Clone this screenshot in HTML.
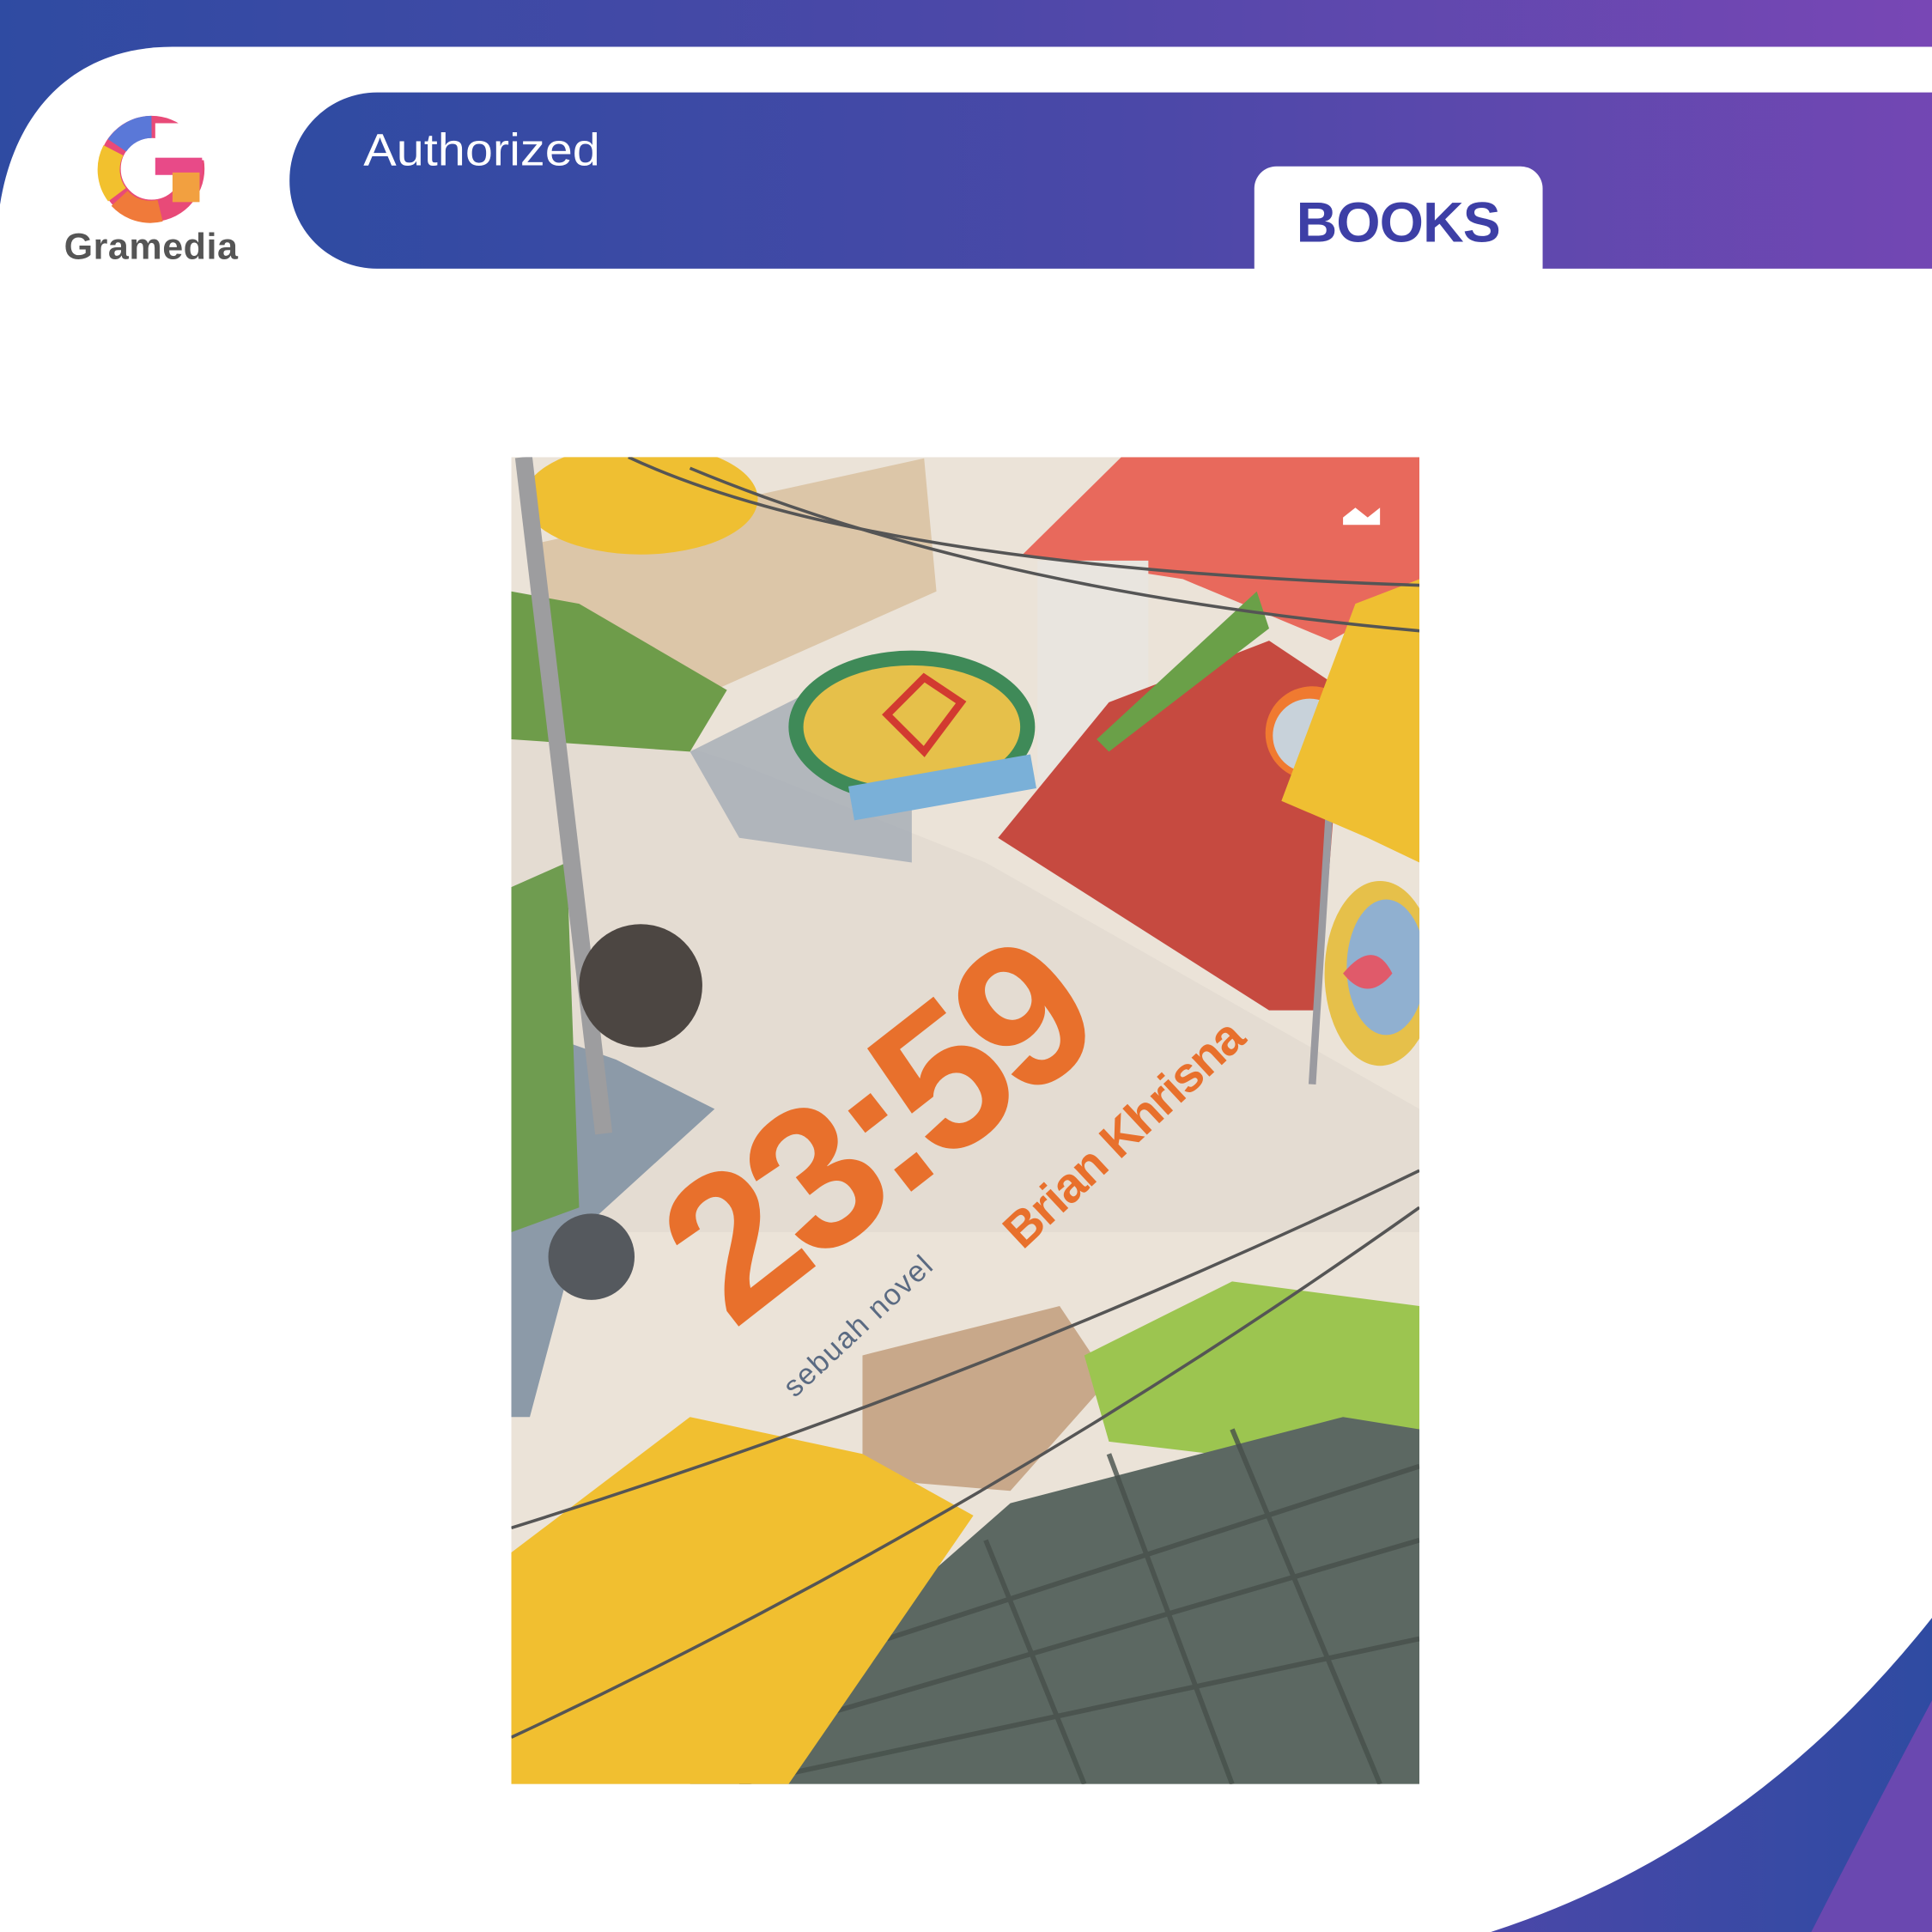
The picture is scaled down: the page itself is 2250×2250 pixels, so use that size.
<!DOCTYPE html>
<html><head><meta charset="utf-8"><style>html,body{margin:0;padding:0;background:#fff}svg{display:block}</style></head>
<body>
<svg width="2250" height="2250" viewBox="0 0 1568 1568" xmlns="http://www.w3.org/2000/svg">
<defs>
<linearGradient id="g1" x1="0" x2="1" y1="0" y2="0"><stop offset="0" stop-color="#2f4ba2"/><stop offset="0.5" stop-color="#4c48a8"/><stop offset="1" stop-color="#7847b5"/></linearGradient>
<linearGradient id="g2" x1="0" x2="1"><stop offset="0" stop-color="#4a47a8"/><stop offset="1" stop-color="#2f4ba2"/></linearGradient>
<clipPath id="cv"><rect x="415" y="371" width="737" height="1077"/></clipPath>
</defs>
<rect width="1568" height="1568" fill="#fff"/>
<rect x="0" y="0" width="1568" height="200" fill="url(#g1)"/>
<path d="M0,201 L0,166 C12,90 60,38 140,38 L1568,38 L1568,201 Z" fill="#fff"/>
<rect x="235" y="75" width="1420" height="143" rx="71" fill="url(#g1)"/>
<text x="295" y="134" font-family="Liberation Sans, sans-serif" font-size="37" fill="#fff" textLength="192" lengthAdjust="spacingAndGlyphs">Authorized</text>
<rect x="1018" y="135" width="234" height="100" rx="18" fill="#fff"/>
<rect x="1018" y="218" width="234" height="30" fill="#fff"/>
<text x="1052" y="196" font-family="Liberation Sans, sans-serif" font-weight="bold" font-size="46" fill="#3d3fa6" textLength="166">BOOKS</text>
<g>
<circle cx="123" cy="137" r="34" fill="none" stroke="#e84a78" stroke-width="18"/>
<path d="M123,103 A34,34 0 0 0 95,118" fill="none" stroke="#5a78d8" stroke-width="18"/>
<path d="M92,122 A34,34 0 0 0 95,158" fill="none" stroke="#f2c12e" stroke-width="18"/>
<path d="M97,161 A34,34 0 0 0 130,171" fill="none" stroke="#f07a3a" stroke-width="18"/>
<rect x="126" y="100" width="40" height="30" fill="#fff"/>
<rect x="126" y="128" width="38" height="14" fill="#e84a88"/>
<rect x="140" y="140" width="22" height="24" fill="#f2a040"/>
<text x="52" y="210" font-family="Liberation Sans, sans-serif" font-weight="bold" font-size="30" fill="#555" textLength="141">Gramedia</text>
</g>
<path d="M1568,1313 Q1420,1500 1210,1568 L1568,1568 Z" fill="url(#g2)"/>
<path d="M1568,1380 Q1520,1470 1470,1568 L1568,1568 Z" fill="#6a48b0"/>
<g clip-path="url(#cv)">
<rect x="415" y="371" width="737" height="1077" fill="#ebe3d8"/>
<polygon points="415,560 600,620 800,700 1152,900 1152,1000 415,1000" fill="#e4dcd2"/>
<polygon points="440,440 750,372 760,480 580,560 440,500" fill="#dcc6a8"/>
<ellipse cx="520" cy="405" rx="95" ry="45" fill="#efbf32"/>
<polygon points="415,480 470,490 590,560 560,610 415,600" fill="#6e9c4a"/>
<polygon points="560,610 700,540 740,560 740,700 600,680" fill="#9aa4b0" opacity="0.7"/>
<polygon points="830,450 910,371 1152,371 1152,480 1080,520 960,470" fill="#e8695c"/>
<rect x="842" y="455" width="90" height="185" fill="#e9e5df"/>
<polygon points="810,680 900,570 1030,520 1090,560 1070,820 1030,820" fill="#c64a40"/>
<polygon points="890,600 1020,480 1030,510 900,610" fill="#6aa048"/>
<ellipse cx="740" cy="590" rx="100" ry="62" fill="#3f8a58"/>
<ellipse cx="740" cy="590" rx="88" ry="50" fill="#e6c04a"/>
<path d="M720,580 l30,-30 l30,20 l-30,40 z" fill="none" stroke="#d23a30" stroke-width="6"/>
<rect x="690" y="625" width="150" height="28" fill="#7ab0d8" transform="rotate(-10 765 640)"/>
<circle cx="1065" cy="595" r="38" fill="#f07a30"/>
<circle cx="1063" cy="597" r="30" fill="#c8d2da"/>
<line x1="1080" y1="640" x2="1065" y2="880" stroke="#9a9aa0" stroke-width="6"/>
<polygon points="1100,490 1152,470 1152,700 1110,680 1040,650" fill="#efbf32"/>
<ellipse cx="1120" cy="790" rx="45" ry="75" fill="#e6c04a"/>
<ellipse cx="1125" cy="785" rx="32" ry="55" fill="#90b0d0"/>
<path d="M1090,790 q25,-30 40,0 q-20,25 -40,0z" fill="#e05a6a"/>
<polygon points="415,830 500,860 580,900 470,1000 430,1150 415,1150" fill="#8c9aa8"/>
<polygon points="415,720 460,700 470,980 415,1000" fill="#6f9c50"/>
<line x1="425" y1="371" x2="490" y2="920" stroke="#9d9d9f" stroke-width="14"/>
<circle cx="520" cy="800" r="50" fill="#4c4642"/>
<circle cx="480" cy="1020" r="35" fill="#55595e"/>
<polygon points="700,1100 860,1060 900,1120 820,1210 700,1200" fill="#c8a88a"/>
<polygon points="880,1100 1000,1040 1152,1060 1152,1200 900,1170" fill="#9cc550"/>
<polygon points="560,1448 820,1220 1090,1150 1152,1160 1152,1448" fill="#5c6862"/>
<g stroke="#47504b" stroke-width="4" fill="none" opacity="0.8">
<path d="M640,1400 L1152,1250"/><path d="M720,1330 L1152,1190"/><path d="M600,1448 L1152,1330"/><path d="M900,1180 L1000,1448"/><path d="M1000,1160 L1120,1448"/><path d="M800,1250 L880,1448"/>
</g>
<polygon points="415,1260 560,1150 700,1180 790,1230 640,1448 415,1448" fill="#f1bf30"/>
<g stroke="#555" stroke-width="2.5" fill="none">
<path d="M510,371 Q700,460 1152,475"/><path d="M560,380 Q800,480 1152,512"/>
<path d="M415,1240 Q800,1120 1152,950"/><path d="M415,1410 Q800,1230 1152,980"/>
</g>
<g font-family="Liberation Sans, sans-serif" fill="#e8702c">
<text x="0" y="0" font-size="165" font-weight="bold" transform="translate(595,1080) rotate(-38)" textLength="390">23:59</text>
<text x="0" y="0" font-size="40" font-weight="bold" transform="translate(830,1015) rotate(-43)" textLength="250">Brian Khrisna</text>
<text x="0" y="0" font-size="24" fill="#5a6a82" transform="translate(645,1135) rotate(-43)" textLength="155">sebuah novel</text>
</g>
<path d="M1090,420 l10,-8 l10,8 l10,-8 v14 h-30z" fill="#fff"/>
</g>
</svg>
</body></html>
